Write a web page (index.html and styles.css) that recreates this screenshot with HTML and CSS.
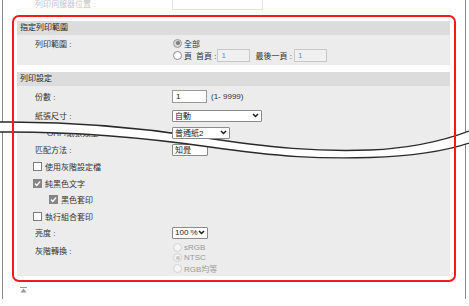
FILE: index.html
```html
<!DOCTYPE html>
<html lang="zh-Hant">
<head>
  <meta charset="UTF-8">
  <title>列印設定</title>
  <link rel="stylesheet" href="styles.css">
</head>
<body>
  <div class="page">
    <div class="sheet">
      <!-- 上方淡出的欄位 -->
      <div class="ghost-row">
        <span class="ghost-label">列印伺服器位置 :</span>
        <span class="ghost-input"></span>
      </div>

      <!-- 紅框區域 -->
      <div class="frame">
        <section class="group">
          <div class="group-head">指定列印範圍</div>
          <div class="group-body range-body">
            <div class="label range-label">列印範圍 :</div>
            <div class="range-opts">
              <div class="opt opt-a">
                <span class="radio on"></span><span>全部</span>
              </div>
              <div class="opt opt-b">
                <span class="radio"></span><span>頁</span>
                <span class="sub">首頁 :</span><span class="box dis">1</span>
                <span class="sub2">最後一頁 :</span><span class="box dis">1</span>
              </div>
            </div>
          </div>
        </section>

        <section class="group">
          <div class="group-head">列印設定</div>
          <div class="group-body">
            <div class="row r-first">
              <div class="label">份數 :</div>
              <span class="box copies">1</span><span class="hint">(1- 9999)</span>
            </div>
            <div class="row">
              <div class="label">紙張尺寸 :</div>
              <span class="select w90">自動<svg class="chev" width="7" height="5" viewBox="0 0 7 5"><polyline points="1,1 3.5,3.5 6,1" /></svg></span>
            </div>
            <div class="row">
              <div class="label sub-label">OHP/紙張類型 :</div>
              <span class="select w58 lifted">普通紙2<svg class="chev" width="7" height="5" viewBox="0 0 7 5"><polyline points="1,1 3.5,3.5 6,1" /></svg></span>
            </div>
            <div class="row">
              <div class="label">匹配方法 :</div>
              <span class="select w36">知覺</span>
            </div>
            <div class="row">
              <span class="check"></span><span>使用灰階設定檔</span>
            </div>
            <div class="row short">
              <span class="check on"><svg width="9" height="9" viewBox="0 0 9 9"><polyline points="2,4.6 3.8,6.4 7,2.6" /></svg></span><span>純黑色文字</span>
            </div>
            <div class="row short indent">
              <span class="check on"><svg width="9" height="9" viewBox="0 0 9 9"><polyline points="2,4.6 3.8,6.4 7,2.6" /></svg></span><span>黑色套印</span>
            </div>
            <div class="row short">
              <span class="check"></span><span>執行組合套印</span>
            </div>
            <div class="row short">
              <div class="label">亮度 :</div>
              <span class="select w36">100 %<svg class="chev" width="7" height="5" viewBox="0 0 7 5"><polyline points="1,1 3.5,3.5 6,1" /></svg></span>
            </div>
            <div class="gray-row">
              <div class="label gray-label">灰階轉換 :</div>
              <div class="gray-opts">
                <div class="gopt"><span class="radio off"></span><span>sRGB</span></div>
                <div class="gopt"><span class="radio off on"></span><span>NTSC</span></div>
                <div class="gopt"><span class="radio off"></span><span>RGB均等</span></div>
              </div>
            </div>
          </div>
        </section>
      </div>

      <!-- 回到頁首 -->
      <div class="to-top">
        <svg width="7" height="6" viewBox="0 0 7 6"><rect x="0" y="0" width="7" height="1" fill="#9a9a9a" /><polygon points="3.5,1.6 6.5,5.5 0.5,5.5" fill="#9a9a9a" /></svg>
      </div>
    </div>

    <!-- 撕頁效果 -->
    <svg class="tear" width="469" height="306" viewBox="0 0 469 306">
      <path d="M0,122 L10,122 C60,122 130,126 200,137 C270,148 320,152 370,150 C415,148 445,140 469,131 L469,143 C445,151 415,156 370,157.5 C320,159 280,157 210,147 C140,137 70,132 10,132 L0,132 Z" fill="#fff" />
      <path d="M0,122 L10,122 C60,122 130,126 200,137 C270,148 320,152 370,150 C415,148 445,140 469,131" fill="none" stroke="#2a2a2a" stroke-width="1.3" />
      <path d="M0,132 L10,132 C70,132 140,137 210,147 C280,157 320,159 370,157.5 C415,156 445,151 469,143" fill="none" stroke="#2a2a2a" stroke-width="1.3" />
    </svg>
  </div>
</body>
</html>
```

FILE: styles.css
```css
body {
  margin: 0;
  background: #fff;
  font-family: "Liberation Sans", "Noto Sans CJK TC", sans-serif;
  font-size: 8px;
  color: #333;
}
.page {
  position: relative;
  width: 469px;
  height: 306px;
  overflow: hidden;
}
.sheet {
  margin-left: 2px;
  width: 464px;
  height: 299px;
  box-sizing: border-box;
  border-left: 1px solid #8a8a8a;
  border-right: 1px solid #8a8a8a;
}

/* 上方淡出的欄位 */
.ghost-row {
  height: 15px;
  display: flex;
  align-items: flex-start;
}
.ghost-label {
  margin-left: 32px;
  width: 137px;
  line-height: 10px;
  color: #c4c4c4;
}
.ghost-input {
  width: 91px;
  height: 11px;
  margin-top: -1px;
  box-sizing: border-box;
  border: 1px solid #e2e2e2;
  background: #fff;
}

/* 紅框 */
.frame {
  position: relative;
  margin-left: 9px;
  width: 444px;
  box-sizing: border-box;
  padding: 6px 6px 6px 5px;
}
.frame::after {
  content: "";
  position: absolute;
  inset: 0;
  border: 2px solid #f21a1a;
  border-radius: 7px;
  z-index: 2;
  pointer-events: none;
}

.group + .group {
  margin-top: 7px;
}
.group-head {
  height: 14px;
  line-height: 14px;
  padding-left: 3px;
  background: #dcdcdc;
  color: #222;
}
.group-body {
  background: #ececec;
  padding: 0 0 2px 16px;
}
.label {
  width: 137px;
  margin-left: 2px;
  flex-shrink: 0;
}

/* 指定列印範圍 */
.range-body {
  display: flex;
  height: 30px;
  box-sizing: border-box;
  padding-top: 3px;
}
.range-label {
  line-height: 10px;
  padding-top: 2px;
}
.range-opts {
  display: flex;
  flex-direction: column;
}
.opt {
  display: flex;
  align-items: center;
}
.opt-a {
  height: 10px;
}
.opt-b {
  height: 14px;
}
.opt .radio {
  margin: 0 2px 0 1px;
}
.sub {
  margin-left: 4px;
  margin-right: 1px;
}
.sub2 {
  margin-left: 5px;
  margin-right: 2px;
}

.radio {
  display: inline-block;
  width: 9px;
  height: 9px;
  box-sizing: border-box;
  border: 1px solid #8e8e8e;
  border-radius: 50%;
  background: #fff;
  position: relative;
}
.radio.on {
  background: #d6d6d6;
  border-color: #9a9a9a;
}
.radio.on::after {
  content: "";
  position: absolute;
  left: 1.5px;
  top: 1.5px;
  width: 4px;
  height: 4px;
  border-radius: 50%;
  background: #7a7a7a;
}
.radio.off {
  border-color: #d2d2d2;
  background: #f4f4f4;
}
.radio.off.on::after {
  background: #c9c9c9;
}

.box {
  display: inline-block;
  height: 13px;
  line-height: 11px;
  box-sizing: border-box;
  border: 1px solid #9a9a9a;
  background: #fff;
  padding-left: 3px;
  color: #222;
}
.box.dis {
  width: 33px;
  border-color: #c8c8c8;
  background: #f0f0f0;
  color: #6f8fbf;
}
.box.copies {
  width: 35px;
}
.hint {
  margin-left: 4px;
}

/* 列印設定的各列 */
.row {
  display: flex;
  align-items: center;
  height: 17px;
}
.row.r-first {
  height: 21px;
}
.row.short {
  height: 16.5px;
}
.row.indent {
  padding-left: 16px;
}
.sub-label {
  margin-left: 14px;
  width: 125px;
}
.select {
  display: inline-flex;
  align-items: center;
  justify-content: space-between;
  height: 12px;
  box-sizing: border-box;
  border: 1px solid #8a8a8a;
  border-radius: 1px;
  background: #fff;
  padding: 0 2px 0 2px;
  color: #222;
  white-space: nowrap;
}
.select.w90 {
  width: 90px;
}
.select.w58 {
  width: 58px;
}
.select.w36 {
  width: 36px;
}
.select.lifted {
  position: relative;
  z-index: 3;
}
.chev {
  flex-shrink: 0;
}
.chev polyline {
  fill: none;
  stroke: #1e1e1e;
  stroke-width: 1.5;
}

.check {
  display: inline-block;
  width: 9px;
  height: 9px;
  box-sizing: border-box;
  border: 1px solid #7c7c7c;
  background: #fff;
  margin-right: 3px;
  position: relative;
}
.check.on {
  background: #858585;
  border-color: #858585;
}
.check svg {
  position: absolute;
  left: -1px;
  top: -1px;
}
.check polyline {
  fill: none;
  stroke: #fff;
  stroke-width: 1.4;
}

/* 灰階轉換 */
.gray-row {
  display: flex;
  height: 33px;
  padding-top: 1px;
  box-sizing: border-box;
}
.gray-label {
  padding-top: 5px;
  line-height: 10px;
}
.gray-opts {
  display: flex;
  flex-direction: column;
  color: #999;
}
.gopt {
  display: flex;
  align-items: center;
  height: 10.5px;
}
.gopt .radio {
  margin: 0 2px 0 1px;
}

/* 回到頁首 */
.to-top {
  padding: 5px 0 0 17px;
  line-height: 0;
}

/* 撕頁效果 */
.tear {
  position: absolute;
  left: 0;
  top: 0;
  z-index: 1;
  pointer-events: none;
}
```
